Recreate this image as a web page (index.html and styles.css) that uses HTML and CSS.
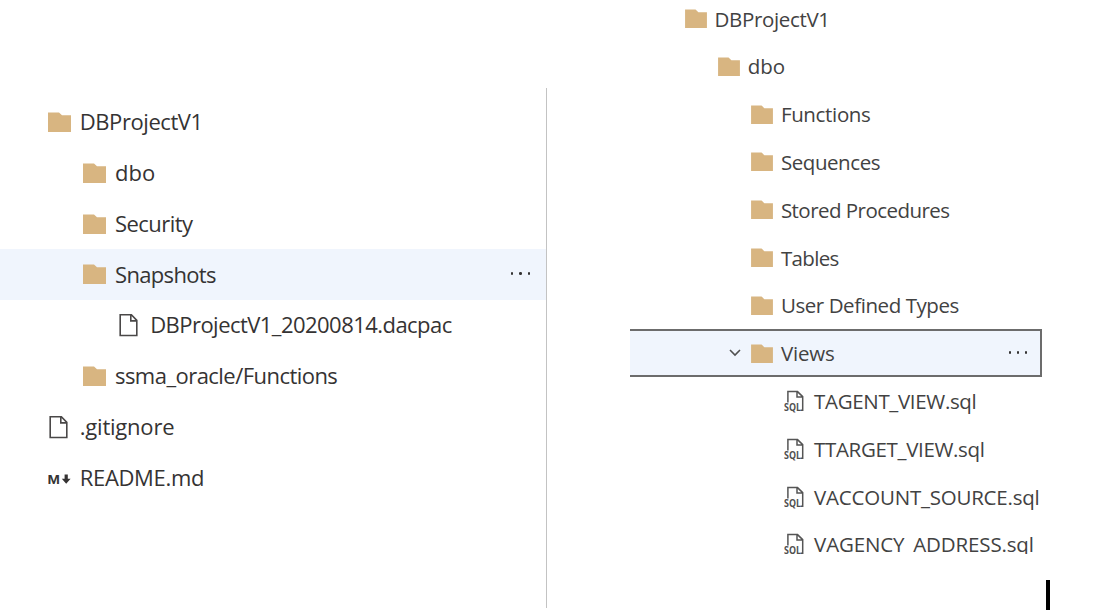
FILE: index.html
```html
<!DOCTYPE html>
<html lang="en">
<head>
<meta charset="utf-8">
<title>DBProjectV1</title>
<link rel="stylesheet" href="styles.css">
</head>
<body>
<svg class="defs" aria-hidden="true">
  <symbol id="folder" viewBox="0 0 23 20"><path d="M0 .5h11l3 2.8h9V20H0z" fill="#d8b581"/></symbol>
  <symbol id="file" viewBox="0 0 23 24"><path d="M2.2 1.8h11.2l5.4 5.6v15.1H2.2zM12.8 1.8v6.1h6" fill="none" stroke="#4a4848" stroke-width="1.6"/></symbol>
  <symbol id="markdown" viewBox="0 0 23 24"><text x="-.6" y="18" class="md-text" textLength="12.4" lengthAdjust="spacingAndGlyphs">M</text><path d="M16.6 8.6h3.2v4.2h2.8l-4.4 5-4.4-5h2.8z" fill="#353333"/></symbol>
  <symbol id="sql" viewBox="0 0 22 24"><path d="M3.9 13.5V2.6h9.6l5.2 5v13.6h-2M13 2.6v5.5h5.7" fill="none" stroke="#555" stroke-width="1.5"/><text x="0" y="22.2" class="sql-text" textLength="17" lengthAdjust="spacingAndGlyphs">SQL</text></symbol>
</svg>
<main class="page">
  <section class="pane pane-left">
    <ul class="tree">
      <li class="row"><svg class="icon"><use href="#folder"/></svg><span class="t4">DBProjectV1</span></li>
      <li class="row l1"><svg class="icon"><use href="#folder"/></svg><span>dbo</span></li>
      <li class="row l1"><svg class="icon"><use href="#folder"/></svg><span class="t5">Security</span></li>
      <li class="row l1 hovered"><svg class="icon"><use href="#folder"/></svg><span class="t6">Snapshots</span><i class="more"><b></b><b></b><b></b></i></li>
      <li class="row l2"><svg class="icon tall"><use href="#file"/></svg><span class="t5">DBProjectV1_20200814.dacpac</span></li>
      <li class="row l1"><svg class="icon"><use href="#folder"/></svg><span class="t5">ssma_oracle/Functions</span></li>
      <li class="row"><svg class="icon tall"><use href="#file"/></svg><span class="t2">.gitignore</span></li>
      <li class="row"><svg class="icon tall"><use href="#markdown"/></svg><span class="t3">README.md</span></li>
    </ul>
  </section>
  <section class="pane pane-right">
    <ul class="tree">
      <li class="row"><svg class="icon"><use href="#folder"/></svg><span class="t3">DBProjectV1</span></li>
      <li class="row l1"><svg class="icon"><use href="#folder"/></svg><span>dbo</span></li>
      <li class="row l2"><svg class="icon"><use href="#folder"/></svg><span class="t3">Functions</span></li>
      <li class="row l2"><svg class="icon"><use href="#folder"/></svg><span class="t4">Sequences</span></li>
      <li class="row l2"><svg class="icon"><use href="#folder"/></svg><span class="t5">Stored Procedures</span></li>
      <li class="row l2"><svg class="icon"><use href="#folder"/></svg><span class="t6">Tables</span></li>
      <li class="row l2"><svg class="icon"><use href="#folder"/></svg><span class="t4">User Defined Types</span></li>
      <li class="row l2 focused"><svg class="chevron" viewBox="0 0 12 8"><path d="M1 1l5 5 5-5" fill="none" stroke="#505050" stroke-width="1.6"/></svg><svg class="icon"><use href="#folder"/></svg><span class="t2">Views</span><i class="more"><b></b><b></b><b></b></i></li>
      <li class="row l3"><svg class="icon tall"><use href="#sql"/></svg><span class="t3">TAGENT_VIEW.sql</span></li>
      <li class="row l3"><svg class="icon tall"><use href="#sql"/></svg><span class="t3">TTARGET_VIEW.sql</span></li>
      <li class="row l3"><svg class="icon tall"><use href="#sql"/></svg><span class="t2">VACCOUNT_SOURCE.sql</span></li>
      <li class="row l3"><svg class="icon tall"><use href="#sql"/></svg><span class="t1">VAGENCY_ADDRESS.sql</span></li>
    </ul>
    <div class="caret"></div>
  </section>
</main>
</body>
</html>
```
FILE: styles.css
```css
* { box-sizing: border-box; }
body { margin: 0; background: #fff; font-family: "Open Sans", "Noto Sans", sans-serif; }
.defs { position: absolute; width: 0; height: 0; }
.page { display: flex; height: 610px; overflow: hidden; }
.tree { list-style: none; margin: 0; padding: 0; }

.pane-left {
  width: 547px;
  height: 520px;
  margin-top: 88px;
  padding-top: 8.6px;
  border-right: 1px solid #c3c3c3;
  color: #353333;
  font-size: 22px;
  --row: 50.8px;
  --start: 47.5px;
  --indent: 35.2px;
}
.pane-left .row span { padding-bottom: 1.4px; }
.pane-right {
  width: 425px;
  margin-left: 83px;
  color: #424242;
  font-size: 20.5px;
  --row: 47.8px;
  --start: 54.5px;
  --indent: 33.2px;
}
.pane-right .tree { width: 412px; height: 554px; overflow: hidden; }
.pane-right .row:first-child { height: 42.5px; padding-bottom: 5.3px; }

.row {
  display: flex;
  align-items: center;
  height: var(--row);
  padding-left: var(--start);
  white-space: nowrap;
}
.l1 { padding-left: calc(var(--start) + var(--indent)); }
.l2 { padding-left: calc(var(--start) + var(--indent) * 2); }
.l3 { padding-left: calc(var(--start) + var(--indent) * 3); }

.icon { flex: none; width: 23px; height: 20px; margin-right: 9.3px; }
.icon.tall { height: 24px; }
.pane-right .icon { width: 22px; height: 19px; margin-right: 8px; }
.pane-right .icon.tall { height: 24px; }
.sql-text { font: 700 10.5px "Open Sans", sans-serif; fill: #505050; }
.md-text { font: 700 13.5px "Liberation Sans", sans-serif; fill: #353333; }

.hovered, .focused { background: #f0f5fd; }
.focused { border: 2px solid #6c6c6c; border-left: 0; padding-left: 99px; }
.chevron { width: 12px; height: 8px; margin-right: 10px; }
.more { display: flex; gap: 6px; margin-left: auto; padding: 0 16px 2px 0; }
.more b { width: 2.5px; height: 2.5px; border-radius: 50%; background: #353333; }
.focused .more { gap: 5.5px; padding: 0 13px 1px 0; }

.t1 { letter-spacing: -.14px; }
.t2 { letter-spacing: -.22px; }
.t3 { letter-spacing: -.34px; }
.t4 { letter-spacing: -.43px; }
.t5 { letter-spacing: -.54px; }
.t6 { letter-spacing: -.66px; }

.caret { width: 4px; height: 30px; margin: 26px 0 0 416px; background: #000; }
```
